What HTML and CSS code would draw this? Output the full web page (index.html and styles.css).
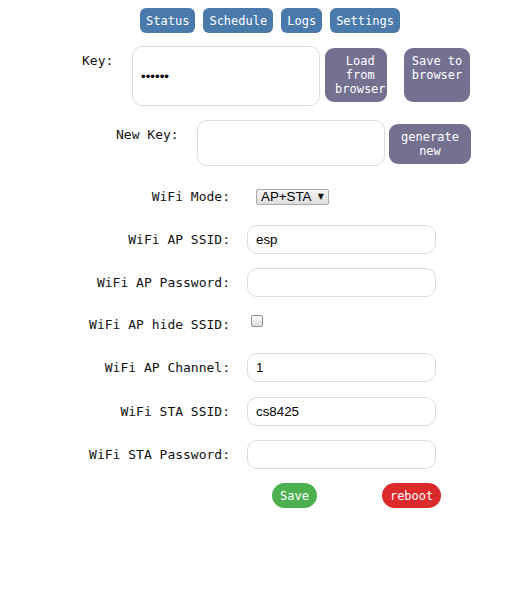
FILE: index.html
```html
<!DOCTYPE html>
<html>
<head>
<meta charset="utf-8">
<link rel="stylesheet" href="styles.css">
</head>
<body>
<nav class="nav">
  <button class="tab">Status</button>
  <button class="tab">Schedule</button>
  <button class="tab">Logs</button>
  <button class="tab">Settings</button>
</nav>

<div class="key-row">
  <label class="key-label">Key:</label>
  <input class="field key-input" type="password" value="123456">
  <button class="act load">Load<br>from<br>browser</button>
  <button class="act save-br">Save to<br>browser</button>
</div>

<div class="newkey-row">
  <label class="newkey-label">New Key:</label>
  <input class="field newkey-input" type="text">
  <button class="act gen">generate<br>new</button>
</div>

<div class="settings">
  <div class="row row-mode">
    <label class="lbl">WiFi Mode:</label>
    <span class="sel-wrap"><select class="sel"><option>AP+STA</option><option>AP</option><option>STA</option></select></span>
  </div>
  <div class="row row-first">
    <label class="lbl">WiFi AP SSID:</label>
    <input class="field inp" type="text" value="esp">
  </div>
  <div class="row">
    <label class="lbl">WiFi AP Password:</label>
    <input class="field inp" type="text" value="">
  </div>
  <div class="row row-check">
    <label class="lbl lbl-check">WiFi AP hide SSID:</label>
    <input class="chk" type="checkbox">
  </div>
  <div class="row row-after-check">
    <label class="lbl">WiFi AP Channel:</label>
    <input class="field inp" type="text" value="1">
  </div>
  <div class="row row-sta">
    <label class="lbl">WiFi STA SSID:</label>
    <input class="field inp" type="text" value="cs8425">
  </div>
  <div class="row">
    <label class="lbl">WiFi STA Password:</label>
    <input class="field inp" type="text" value="">
  </div>
</div>

<div class="actions">
  <button class="pill green">Save</button>
  <button class="pill red">reboot</button>
</div>
</body>
</html>
```

FILE: styles.css
```css
html, body {
  margin: 0;
  padding: 0;
  background: #fff;
}
body {
  width: 531px;
  font-family: "DejaVu Sans Mono", monospace;
  font-size: 13px;
  color: #111;
}
button {
  font-family: "DejaVu Sans Mono", monospace;
  font-size: 12px;
  line-height: 14px;
  color: #fff;
  border: 0;
  margin: 0;
  cursor: pointer;
}

/* nav */
.nav {
  display: flex;
  justify-content: center;
  gap: 8px;
  padding: 8px 0 0 9px;
}
.tab {
  background: #4a7aab;
  border-radius: 6px;
  padding: 6px 6px 5px;
  height: 25px;
}

/* inputs */
.field {
  box-sizing: border-box;
  border: 1px solid #dcdcdc;
  border-radius: 10px;
  padding: 0 8px;
  font-family: "Liberation Sans", Arial, sans-serif;
  font-size: 13.333px;
  color: #000;
  background: #fff;
  margin: 0;
  outline: none;
}

/* key rows */
.act {
  background: #737090;
  border-radius: 9px;
  display: flex;
  flex-direction: column;
  align-items: center;
  justify-content: flex-start;
  box-sizing: border-box;
  padding-top: 6px;
  padding-bottom: 6px;
}
.key-row {
  display: flex;
  align-items: flex-start;
  margin-top: 13px;
  padding-left: 82px;
}
.key-label {
  width: 50px;
  margin-top: 7px;
  line-height: 15px;
}
.key-input {
  width: 188px;
  height: 60px;
}
.load {
  width: 62px;
  height: 54px;
  margin: 2px 0 0 5px;
  padding-left: 10px;
  padding-right: 1px;
  align-items: flex-start;
  text-align: center;
}
.save-br {
  width: 66px;
  height: 54px;
  margin: 2px 0 0 17px;
  padding-left: 4px;
  padding-right: 4px;
}
.newkey-row {
  display: flex;
  align-items: flex-start;
  margin-top: 14px;
  padding-left: 116px;
}
.newkey-label {
  width: 81px;
  margin-top: 7px;
  line-height: 15px;
}
.newkey-input {
  width: 188px;
  height: 46px;
}
.gen {
  width: 82px;
  height: 40px;
  margin: 4px 0 0 4px;
}

/* settings */
.settings {
  padding-left: 79px;
}
.row {
  display: flex;
  align-items: baseline;
  gap: 17px;
  margin-top: 14px;
}
.lbl {
  width: 151px;
  text-align: right;
  flex: none;
  line-height: 15px;
}
.inp {
  width: 189px;
  height: 29px;
}
.row-mode { margin-top: 23px; }
.row-first { margin-top: 20px; }
.row-check {
  align-items: flex-start;
  margin-top: 15px;
}
.lbl-check { margin-top: 5px; }
.row-after-check { margin-top: 21px; }
.row-sta { margin-top: 15px; }

.sel-wrap {
  position: relative;
  display: inline-block;
  margin-left: 9px;
}
.sel {
  appearance: none;
  -webkit-appearance: none;
  box-sizing: border-box;
  width: 73px;
  height: 16px;
  margin: 0;
  padding: 0 0 0 4px;
  border: 1px solid #a9a9a9;
  border-radius: 2px;
  background: linear-gradient(#f6f6f6, #dddddd);
  font-family: "Liberation Sans", Arial, sans-serif;
  font-size: 13.333px;
  line-height: 14px;
  color: #000;
}
.sel-wrap::after {
  content: "\25BC";
  position: absolute;
  right: 5px;
  top: 3px;
  font-family: "DejaVu Sans", sans-serif;
  font-size: 8px;
  line-height: 10px;
  color: #111;
  pointer-events: none;
}
.chk {
  appearance: none;
  -webkit-appearance: none;
  box-sizing: border-box;
  width: 12px;
  height: 12px;
  margin: 3px 3px 3px 4px;
  border: 1px solid #8f8f8f;
  border-radius: 2px;
  background: linear-gradient(#fbfbfb, #dedede);
}

/* bottom actions */
.actions {
  display: flex;
  margin-top: 14px;
  padding-left: 272px;
  gap: 65px;
}
.pill {
  height: 25px;
  padding: 0 8px;
  border-radius: 12.5px;
}
.green { background: #4caf50; }
.red { background: #dc2a2c; }
```
